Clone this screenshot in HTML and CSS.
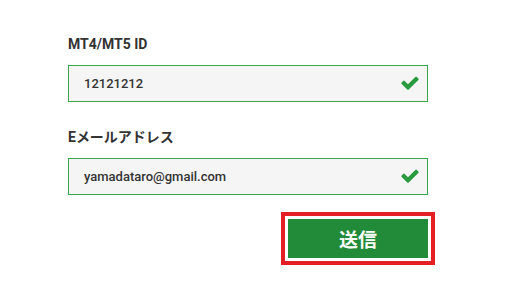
FILE: index.html
```html
<!DOCTYPE html>
<html lang="ja">
<head>
    <meta charset="UTF-8">
    <meta name="viewport" content="width=device-width, initial-scale=1.0">
    <title>MT4/MT5 ID</title>
    <link rel="stylesheet" href="styles.css">
</head>
<body>
    <form class="form">
        <div class="field">
            <label class="label" for="account-id">MT4/MT5 ID</label>
            <div class="input-wrap">
                <input id="account-id" class="input" type="text" value="12121212">
                <svg class="check" viewBox="0 300 1792 1400" width="20" height="16">
                    <path d="M1671 566q0 40-28 68l-724 724-136 136q-28 28-68 28t-68-28l-136-136-362-362q-28-28-28-68t28-68l136-136q28-28 68-28t68 28l294 295 656-657q28-28 68-28t68 28l136 136q28 28 28 68z" fill="#2a9a3e"/>
                </svg>
            </div>
        </div>
        <div class="field">
            <label class="label" for="email">Eメールアドレス</label>
            <div class="input-wrap">
                <input id="email" class="input" type="text" value="yamadataro@gmail.com">
                <svg class="check" viewBox="0 300 1792 1400" width="20" height="16">
                    <path d="M1671 566q0 40-28 68l-724 724-136 136q-28 28-68 28t-68-28l-136-136-362-362q-28-28-28-68t28-68l136-136q28-28 68-28t68 28l294 295 656-657q28-28 68-28t68 28l136 136q28 28 28 68z" fill="#2a9a3e"/>
                </svg>
            </div>
        </div>
        <div class="actions">
            <div class="highlight">
                <button class="submit" type="button">送信</button>
            </div>
        </div>
    </form>
</body>
</html>
```

FILE: styles.css
```css
body {
    margin: 0;
    padding: 0;
    background: #fff;
    font-family: Roboto, "Noto Sans CJK JP", sans-serif;
    color: #333;
}
.form {
    width: 360px;
    padding: 33px 0 0 68px;
}
.field {
    margin-bottom: 24px;
}
.label {
    display: block;
    font-size: 14px;
    font-weight: 700;
    line-height: 22px;
    margin-bottom: 10px;
    color: #333;
}
.input-wrap {
    position: relative;
}
.input {
    display: block;
    box-sizing: border-box;
    width: 360px;
    height: 37px;
    padding: 0 40px 0 15px;
    border: 1px solid #3aa64a;
    background: #f5f5f5;
    font-family: Roboto, sans-serif;
    font-size: 13px;
    font-weight: 500;
    color: #333;
    outline: none;
}
.check {
    position: absolute;
    right: 8px;
    top: 11px;
}
.actions {
    display: flex;
    justify-content: flex-end;
    margin-top: -7px;
    margin-right: -7px;
}
.highlight {
    border: 4px solid #e41f26;
    padding: 3px;
    background: #fff;
}
.submit {
    display: block;
    width: 140px;
    height: 39px;
    border: none;
    background: #228b3a;
    color: #fff;
    font-family: "Noto Sans CJK JP", sans-serif;
    font-size: 19px;
    font-weight: 700;
    cursor: pointer;
}
```
